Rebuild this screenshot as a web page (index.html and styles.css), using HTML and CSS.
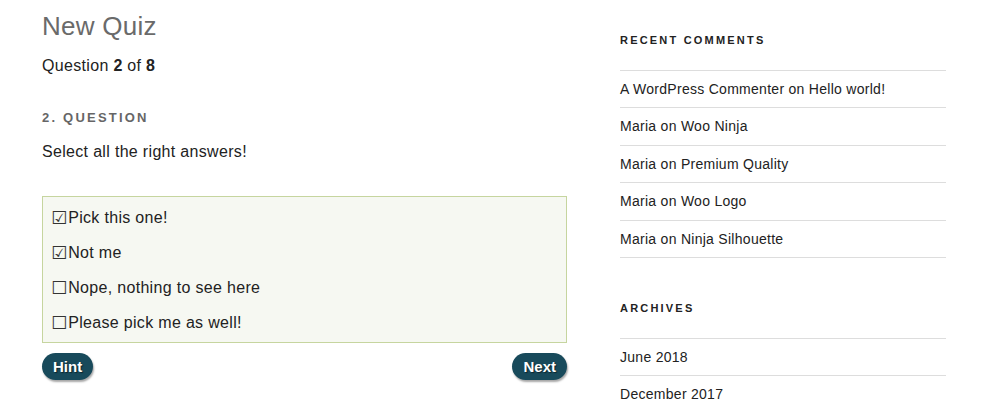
FILE: index.html
```html
<!DOCTYPE html>
<html lang="en">
<head>
<meta charset="utf-8">
<title>New Quiz</title>
<link rel="stylesheet" href="styles.css">
</head>
<body>
<div class="wrap">
  <main class="content">
    <h1 class="title">New Quiz</h1>
    <p class="progress">Question <b>2</b> of <b>8</b></p>
    <h3 class="qhead">2. Question</h3>
    <p class="qtext">Select all the right answers!</p>
    <ul class="answers">
      <li><span class="cb">☑</span>Pick this one!</li>
      <li><span class="cb">☑</span>Not me</li>
      <li><span class="cb">☐</span>Nope, nothing to see here</li>
      <li><span class="cb">☐</span>Please pick me as well!</li>
    </ul>
    <div class="buttons">
      <button class="btn">Hint</button>
      <button class="btn">Next</button>
    </div>
  </main>
  <aside class="sidebar">
    <section class="widget">
      <h2 class="wtitle">Recent Comments</h2>
      <ul class="wlist">
        <li>A WordPress Commenter on Hello world!</li>
        <li>Maria on Woo Ninja</li>
        <li>Maria on Premium Quality</li>
        <li>Maria on Woo Logo</li>
        <li>Maria on Ninja Silhouette</li>
      </ul>
    </section>
    <section class="widget">
      <h2 class="wtitle">Archives</h2>
      <ul class="wlist">
        <li>June 2018</li>
        <li>December 2017</li>
      </ul>
    </section>
  </aside>
</div>
</body>
</html>
```

FILE: styles.css
```css
html, body {
  margin: 0;
  padding: 0;
  background: #fff;
}
body {
  font-family: "Liberation Sans", Arial, sans-serif;
  color: #222;
  overflow: hidden;
  height: 410px;
}
.wrap {
  display: flex;
  padding-left: 42px;
  height: 410px;
  overflow: hidden;
}
.content {
  width: 525px;
}
.title {
  margin: 9px 0 0;
  font-size: 26px;
  font-weight: 300;
  color: #6a6a6a;
  line-height: 34px;
  letter-spacing: 0.01em;
}
.progress {
  margin: 11px 0 0;
  font-size: 16px;
  line-height: 24px;
  letter-spacing: 0.02em;
}
.progress b { font-weight: 800; }
.qhead {
  margin: 30px 0 0;
  font-size: 13px;
  font-weight: 800;
  letter-spacing: 0.17em;
  text-transform: uppercase;
  color: #666;
  line-height: 20px;
}
.qtext {
  margin: 12px 0 0;
  font-size: 16px;
  line-height: 24px;
  letter-spacing: 0.02em;
}
.answers {
  list-style: none;
  margin: 32px 0 0;
  padding: 3px 8px 2px;
  border: 1px solid #c6d59f;
  background: #f6f8f2;
}
.answers li {
  font-size: 16px;
  line-height: 35px;
  letter-spacing: 0.02em;
  display: flex;
  align-items: center;
}
.cb {
  font-family: "DejaVu Sans", sans-serif;
  font-size: 18px;
  line-height: 1;
  margin-right: 1px;
  color: #333;
  letter-spacing: 0;
}
.buttons {
  display: flex;
  justify-content: space-between;
  margin-top: 10px;
}
.btn {
  font-family: "Liberation Sans", Arial, sans-serif;
  font-weight: 700;
  font-size: 15px;
  color: #fff;
  background: #184a5b;
  border: 0;
  border-radius: 14px;
  padding: 0 11px;
  height: 27px;
  box-shadow: 1px 2px 2px rgba(0,0,0,0.35);
  text-shadow: 1px 1px 1px rgba(0,0,0,0.5);
}
.sidebar {
  margin-left: 53px;
  width: 326px;
}
.widget { margin-bottom: 43px; }
.wtitle {
  margin: 33px 0 0;
  font-size: 11px;
  font-weight: 800;
  letter-spacing: 0.2em;
  text-transform: uppercase;
  color: #222;
  line-height: 14px;
}
.widget + .widget .wtitle { margin-top: 0; }
.wlist {
  list-style: none;
  margin: 23px 0 0;
  padding: 0;
  border-top: 1px solid #ddd;
}
.wlist li {
  font-size: 14px;
  line-height: 20.4px;
  letter-spacing: 0.02em;
  padding: 8px 0;
  border-bottom: 1px solid #ddd;
  color: #222;
}
```
